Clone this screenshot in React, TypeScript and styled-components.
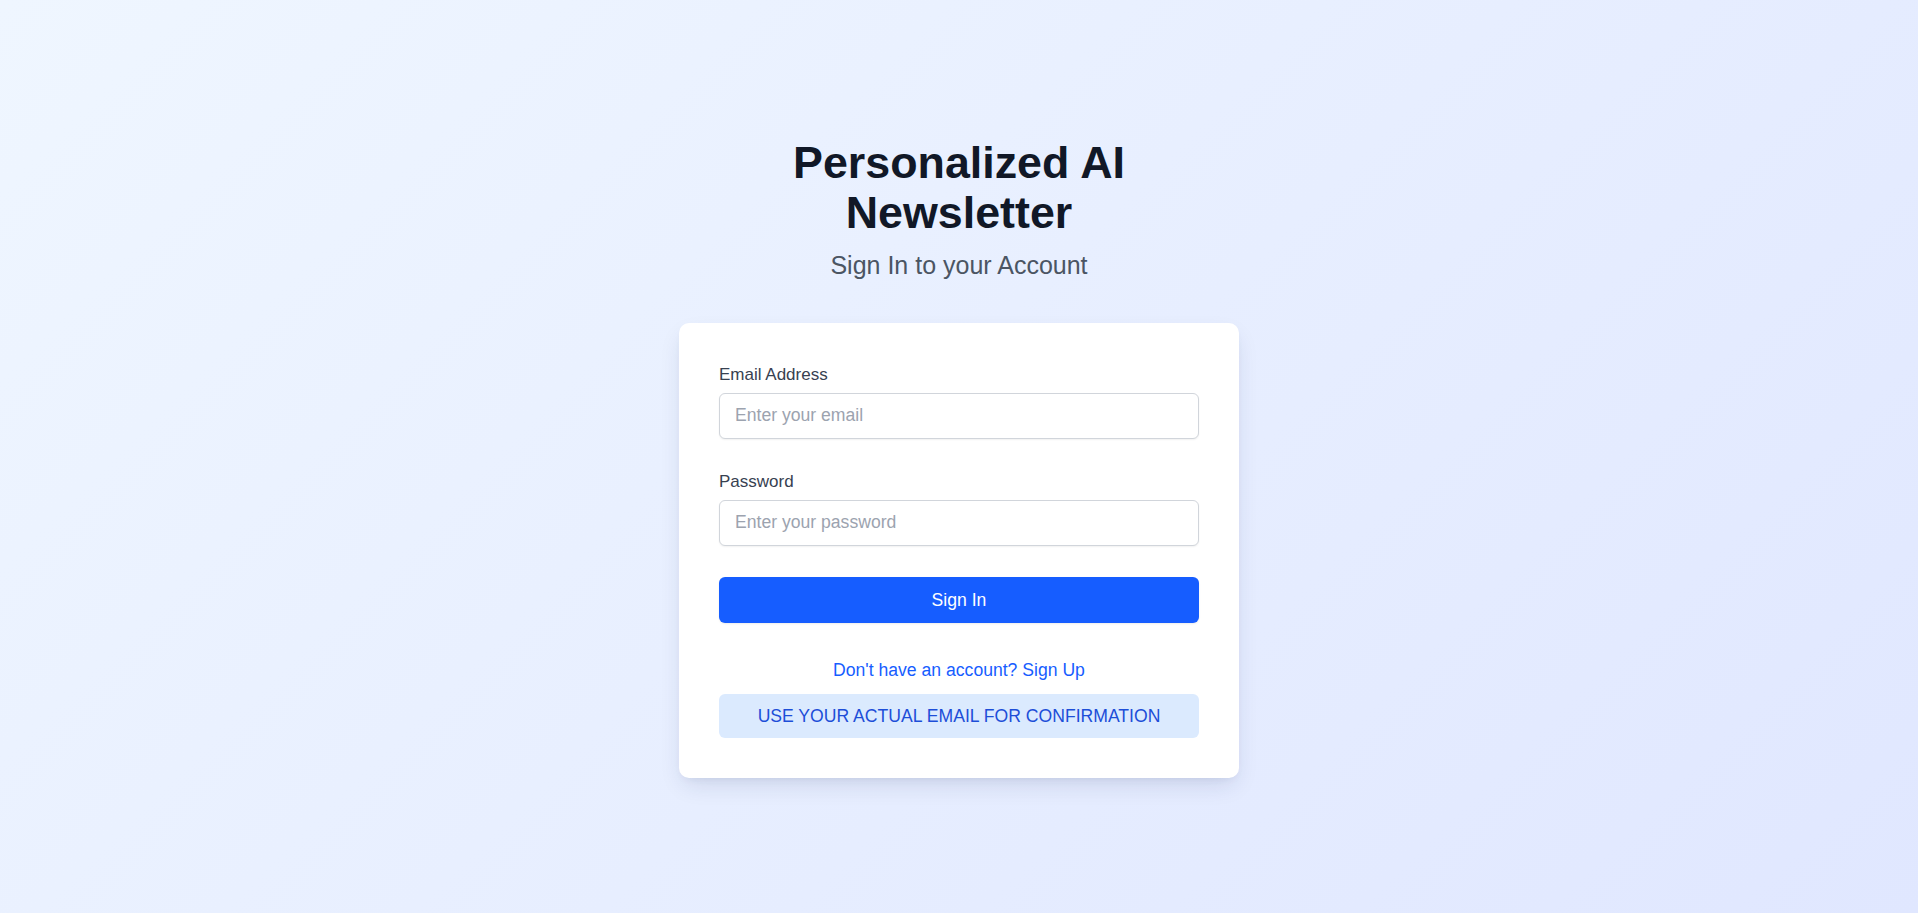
import React from "react";
import styled, { createGlobalStyle } from "styled-components";

const GlobalStyle = createGlobalStyle`
  html, body {
    margin: 0;
    padding: 0;
  }
  body {
    font-family: "Liberation Sans", Arial, sans-serif;
    background: linear-gradient(135deg, #eff6ff 0%, #e0e7ff 100%);
    min-height: 100vh;
  }
  * { box-sizing: border-box; }
`;

const Page = styled.main`
  min-height: 100vh;
  padding-top: 3px;
  display: flex;
  flex-direction: column;
  align-items: center;
  justify-content: center;
  background: linear-gradient(135deg, #eff6ff 0%, #e0e7ff 100%);
`;

const Wrapper = styled.div`
  width: 560px;
  display: flex;
  flex-direction: column;
  align-items: stretch;
`;

const Header = styled.header`
  text-align: center;
`;

const Title = styled.h1`
  margin: 0;
  font-size: 44.8px;
  line-height: 1.1;
  font-weight: 700;
  color: #111827;
`;

const Subtitle = styled.p`
  margin: 14px 0 0;
  font-size: 25px;
  line-height: 29px;
  color: #4b5563;
`;

const Card = styled.form`
  margin-top: 43px;
  background: #ffffff;
  border-radius: 10px;
  padding: 40px;
  box-shadow: 0 10px 25px -5px rgba(30, 41, 90, 0.14), 0 4px 8px -4px rgba(30, 41, 90, 0.08);
  display: flex;
  flex-direction: column;
`;

const Field = styled.div`
  display: flex;
  flex-direction: column;
  margin-bottom: 31px;
`;

const Label = styled.label`
  font-size: 17px;
  line-height: 23px;
  color: #374151;
  margin-bottom: 7px;
`;

const Input = styled.input`
  height: 46px;
  width: 100%;
  padding: 0 15px;
  font-family: inherit;
  font-size: 17.6px;
  color: #111827;
  background: #fff;
  border: 1px solid #d1d5db;
  border-radius: 6px;
  box-shadow: 0 1px 2px rgba(0, 0, 0, 0.06);
  outline: none;
  &::placeholder {
    color: #9ca3af;
  }
`;

const SubmitButton = styled.button`
  height: 46px;
  width: 100%;
  border: none;
  border-radius: 6px;
  background: #165dff;
  color: #ffffff;
  font-family: inherit;
  font-size: 17.6px;
  line-height: 20px;
  cursor: pointer;
  box-shadow: 0 1px 2px rgba(0, 0, 0, 0.08);
`;

const Footer = styled.div`
  margin-top: 37px;
  display: flex;
  flex-direction: column;
  align-items: stretch;
  text-align: center;
`;

const SignUpLink = styled.a`
  font-size: 17.6px;
  line-height: 20px;
  color: #165dff;
  text-decoration: none;
  cursor: pointer;
`;

const Notice = styled.div`
  margin-top: 14px;
  padding: 12px;
  border-radius: 6px;
  background: #dbeafe;
  color: #1d4ed8;
  font-size: 17.6px;
  line-height: 20px;
  text-align: center;
`;

export default function App() {
  return (
    <>
      <GlobalStyle />
      <Page>
        <Wrapper>
          <Header>
            <Title>Personalized AI Newsletter</Title>
            <Subtitle>Sign In to your Account</Subtitle>
          </Header>
          <Card onSubmit={(e) => e.preventDefault()}>
            <Field>
              <Label htmlFor="email">Email Address</Label>
              <Input id="email" type="email" placeholder="Enter your email" />
            </Field>
            <Field>
              <Label htmlFor="password">Password</Label>
              <Input id="password" type="password" placeholder="Enter your password" />
            </Field>
            <SubmitButton type="submit">Sign In</SubmitButton>
            <Footer>
              <SignUpLink>Don't have an account? Sign Up</SignUpLink>
              <Notice>USE YOUR ACTUAL EMAIL FOR CONFIRMATION</Notice>
            </Footer>
          </Card>
        </Wrapper>
      </Page>
    </>
  );
}
